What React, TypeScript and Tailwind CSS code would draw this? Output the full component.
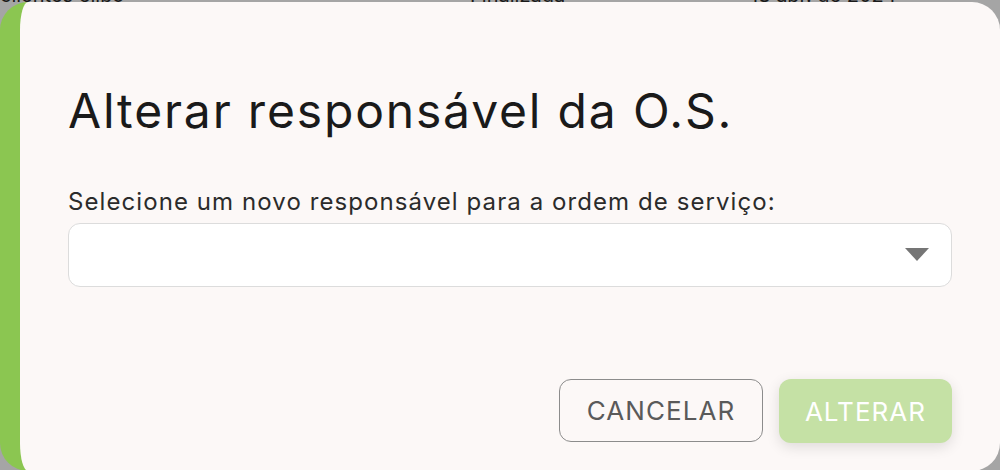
export default function App() {
  return (
    <div className="w-[1000px] h-[470px] overflow-hidden bg-[#a5a5a5] font-['Inter','Roboto',sans-serif]">
      <div className="h-[2px] overflow-hidden flex items-end">
        <div className="flex w-full text-[20px] leading-[14px] text-[#1a1a1a]">
          <span className="w-[470px]">clientes elipo</span>
          <span className="w-[280px]">Finalizada</span>
          <span>18 abr. de 2024</span>
        </div>
      </div>
      <div className="h-[469px] bg-[#fcf8f7] border-l-[20px] border-[#8bc651] rounded-[28px] pl-[48px] pr-[48px] pt-[80px] flex flex-col">
        <h2 className="text-[48px] leading-[57px] tracking-[0.038em] text-[#1a1a1a] font-normal whitespace-nowrap">
          Alterar responsável da O.S.
        </h2>
        <label className="mt-[49px] text-[24px] leading-[28px] tracking-[0.045em] text-[#2b2b2b] whitespace-nowrap">
          Selecione um novo responsável para a ordem de serviço:
        </label>
        <div className="mt-[7px] h-[64px] bg-white border border-[#dcdcdc] rounded-[12px] flex items-center justify-end pr-[22px]">
          <svg width="24" height="14" viewBox="0 0 24 14">
            <path d="M0 0 L24 0 L12 13 Z" fill="#757575" />
          </svg>
        </div>
        <div className="mt-[92px] flex justify-end gap-[16px]">
          <button className="w-[204px] h-[63px] rounded-[12px] border-[1.5px] border-[#8c8c8c] bg-[#fcf8f7] text-[26px] text-[#5a5a5a] tracking-[0.04em]">
            CANCELAR
          </button>
          <button className="w-[173px] h-[64px] rounded-[12px] bg-[#c5e1a5] text-[26px] text-white tracking-[0.04em] shadow-[0_4px_14px_rgba(0,0,0,0.12)]">
            ALTERAR
          </button>
        </div>
      </div>
    </div>
  );
}
